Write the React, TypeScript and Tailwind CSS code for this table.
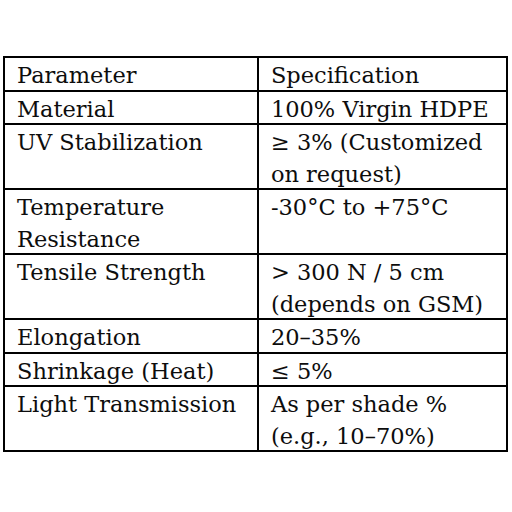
import React from "react";

const rows: { label: React.ReactNode; spec: React.ReactNode }[] = [
  { label: "Parameter", spec: "Specification" },
  { label: "Material", spec: "100% Virgin HDPE" },
  {
    label: "UV Stabilization",
    spec: (
      <>
        ≥ 3% (Customized
        <br />
        on request)
      </>
    ),
  },
  {
    label: (
      <>
        Temperature
        <br />
        Resistance
      </>
    ),
    spec: "-30°C to +75°C",
  },
  {
    label: "Tensile Strength",
    spec: (
      <>
        &gt; 300 N / 5 cm
        <br />
        (depends on GSM)
      </>
    ),
  },
  { label: "Elongation", spec: "20–35%" },
  { label: "Shrinkage (Heat)", spec: "≤ 5%" },
  {
    label: "Light Transmission",
    spec: (
      <>
        As per shade %
        <br />
        (e.g., 10–70%)
      </>
    ),
  },
];

export default function App() {
  return (
    <div className="w-[512px] h-[512px] bg-white pt-[56px] pl-[3px]">
      <table
        className="w-[505px] border-collapse border-2 border-black text-[22.5px] leading-[31.5px] text-[#0d0d0d]"
        style={{ fontFamily: '"DejaVu Serif", "Liberation Serif", serif' }}
      >
        <colgroup>
          <col className="w-[255px]" />
          <col className="w-[250px]" />
        </colgroup>
        <tbody>
          {rows.map((r, i) => (
            <tr key={i}>
              <td className="border-2 border-black pl-[12px] py-0 align-top whitespace-nowrap">
                <span className="relative top-[2px] block">{r.label}</span>
              </td>
              <td className="border-2 border-black pl-[12px] py-0 align-top whitespace-nowrap">
                <span className="relative top-[2px] block">{r.spec}</span>
              </td>
            </tr>
          ))}
        </tbody>
      </table>
    </div>
  );
}
